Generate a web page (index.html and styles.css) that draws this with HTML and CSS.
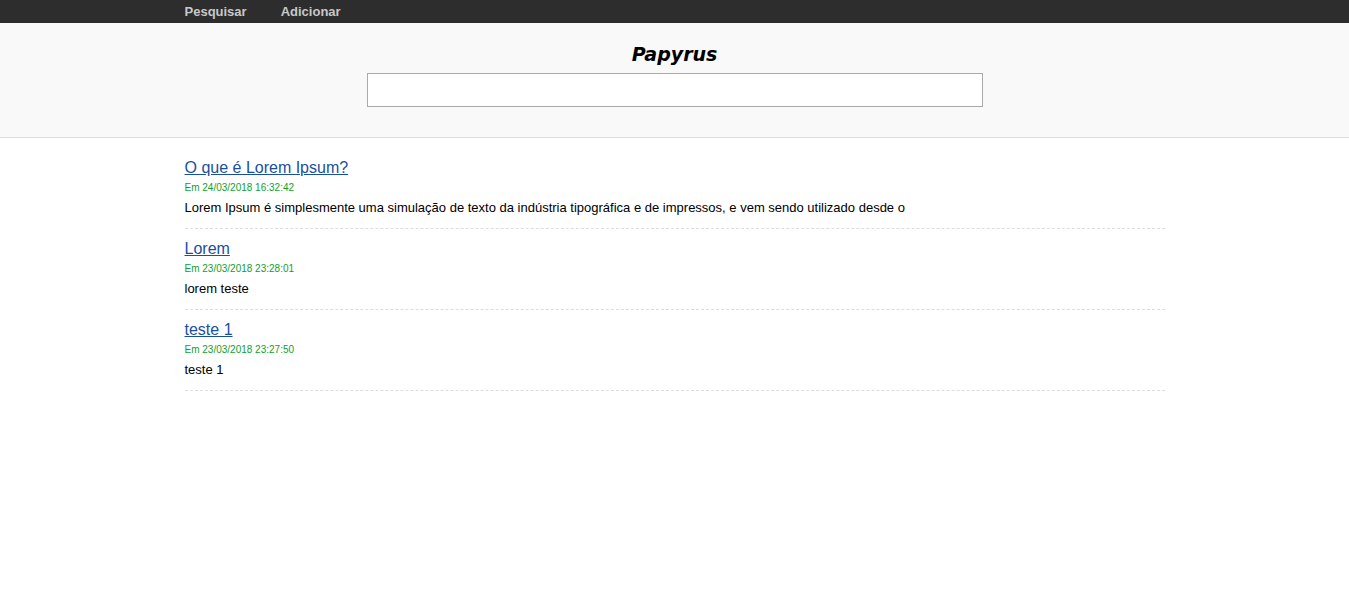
FILE: index.html
```html
<!DOCTYPE html>
<html lang="pt">
<head>
<meta charset="utf-8">
<title>Papyrus</title>
<link rel="stylesheet" href="styles.css">
</head>
<body>
<nav class="topbar">
  <div class="container nav-links">
    <a href="#" class="nav-link">Pesquisar</a>
    <a href="#" class="nav-link">Adicionar</a>
  </div>
</nav>
<header class="header">
  <h1 class="brand">Papyrus</h1>
  <input class="search" type="text">
</header>
<main class="container posts">
  <article class="post">
    <a href="#" class="post-title">O que é Lorem Ipsum?</a>
    <div class="post-date">Em 24/03/2018 16:32:42</div>
    <p class="post-text">Lorem Ipsum é simplesmente uma simulação de texto da indústria tipográfica e de impressos, e vem sendo utilizado desde o</p>
  </article>
  <article class="post">
    <a href="#" class="post-title">Lorem</a>
    <div class="post-date">Em 23/03/2018 23:28:01</div>
    <p class="post-text">lorem teste</p>
  </article>
  <article class="post">
    <a href="#" class="post-title">teste 1</a>
    <div class="post-date">Em 23/03/2018 23:27:50</div>
    <p class="post-text">teste 1</p>
  </article>
</main>
</body>
</html>
```
FILE: styles.css
```css
* { box-sizing: border-box; }
body {
  margin: 0;
  font-family: "Liberation Sans", Arial, sans-serif;
  background: #fff;
  color: #000;
}
.container {
  width: 980px;
  margin: 0 auto;
}
.topbar {
  background: #2d2d2d;
  height: 23px;
}
.nav-links {
  display: flex;
  gap: 34px;
  height: 23px;
  align-items: center;
}
.nav-link {
  color: #c8c8c8;
  font-weight: bold;
  font-size: 13px;
  text-decoration: none;
}
.header {
  background: #f9f9f9;
  border-bottom: 1px solid #dddddd;
  display: flex;
  flex-direction: column;
  align-items: center;
  padding: 16px 0 30px;
}
.brand {
  margin: 0 0 4px;
  font-family: "DejaVu Sans", sans-serif;
  font-style: italic;
  font-weight: bold;
  font-size: 19px;
  line-height: 30px;
  letter-spacing: 0;
}
.search {
  width: 616px;
  height: 34px;
  border: 1px solid #aaaaaa;
  background: #fff;
  margin: 0;
}
.posts {
  padding-top: 20px;
}
.post {
  border-bottom: 1px dashed #dddddd;
  padding-bottom: 11px;
  margin-bottom: 10px;
}
.post-title {
  display: inline-block;
  color: #1a4f9e;
  font-size: 16px;
  line-height: 20px;
  text-decoration: underline;
}
.post-date {
  color: #129e2c;
  font-size: 10px;
  line-height: 13px;
  margin-top: 3px;
}
.post-text {
  margin: 5px 0 0;
  font-size: 13px;
  line-height: 18px;
}
```
